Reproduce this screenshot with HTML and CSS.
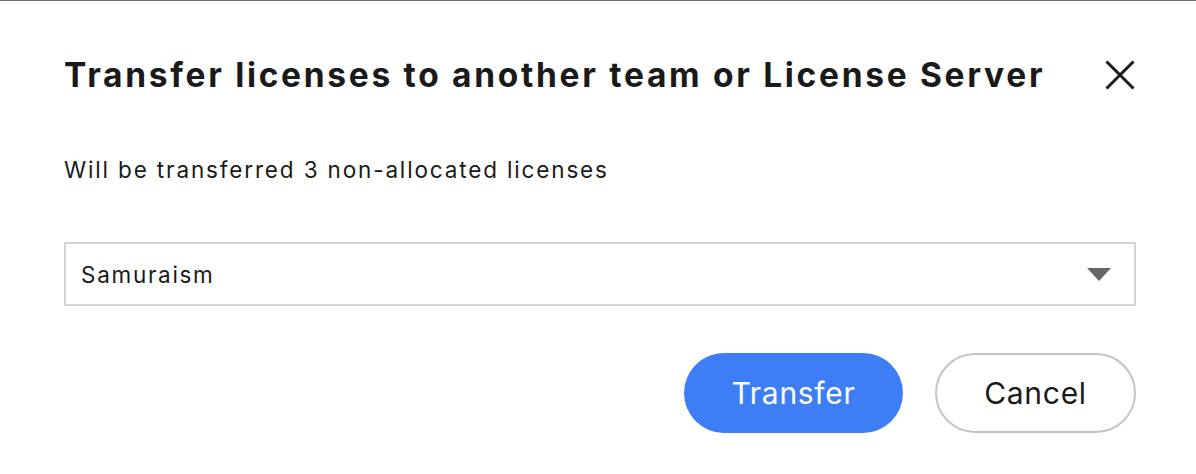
FILE: index.html
```html
<!DOCTYPE html>
<html>
<head>
<meta charset="utf-8">
<link rel="stylesheet" href="styles.css">
</head>
<body>
<div class="dialog">
  <div class="header">
    <h1 class="title">Transfer licenses to another team or License Server</h1>
    <button class="close" aria-label="Close">
      <svg width="30" height="30" viewBox="0 0 30 30"><path d="M1.5 1.5 L28.5 28.5 M28.5 1.5 L1.5 28.5" stroke="#1a1a1a" stroke-width="3" fill="none"/></svg>
    </button>
  </div>
  <p class="desc">Will be transferred 3 non-allocated licenses</p>
  <div class="select">
    <span class="value">Samuraism</span>
    <svg class="arrow" width="24" height="13" viewBox="0 0 24 13"><path d="M0 0 H24 L12 13 Z" fill="#666"/></svg>
  </div>
  <div class="actions">
    <button class="btn primary">Transfer</button>
    <button class="btn secondary">Cancel</button>
  </div>
</div>
</body>
</html>
```
FILE: styles.css
```css
html, body {
  margin: 0;
  padding: 0;
  background: #fff;
}
body {
  border-top: 1px solid #6b6b6b;
  font-family: Inter, "Noto Sans", sans-serif;
  color: #1a1a1a;
}
.dialog {
  padding: 0 60px 0 64px;
}
.header {
  display: flex;
  align-items: center;
  justify-content: space-between;
  height: 148px;
  padding-bottom: 2px;
}
.title {
  margin: 0;
  font-size: 33.5px;
  font-weight: 700;
  letter-spacing: 2.7px;
  line-height: 40px;
}
.close {
  border: none;
  background: none;
  padding: 0;
  margin-right: 1px;
  width: 30px;
  height: 30px;
  display: flex;
  cursor: pointer;
}
.desc {
  margin: 5px 0 0;
  font-size: 22.5px;
  letter-spacing: 1.85px;
  line-height: 28px;
}
.select {
  margin-top: 58px;
  height: 60px;
  border: 2px solid #d2d2d2;
  display: flex;
  align-items: center;
  justify-content: space-between;
  padding: 0 23px 0 15px;
}
.value {
  font-size: 22.5px;
  letter-spacing: 1.7px;
}
.arrow {
  display: block;
}
.actions {
  display: flex;
  justify-content: flex-end;
  gap: 32px;
  margin-top: 47px;
}
.btn {
  height: 80px;
  border-radius: 40px;
  font-family: Inter, "Noto Sans", sans-serif;
  font-size: 30px;
  letter-spacing: 0.7px;
  padding: 0;
  cursor: pointer;
}
.primary {
  width: 219px;
  background: #3d7ef6;
  color: #fff;
  border: none;
}
.secondary {
  width: 201px;
  background: #fff;
  color: #1a1a1a;
  border: 2px solid #c4c4c4;
}
```
